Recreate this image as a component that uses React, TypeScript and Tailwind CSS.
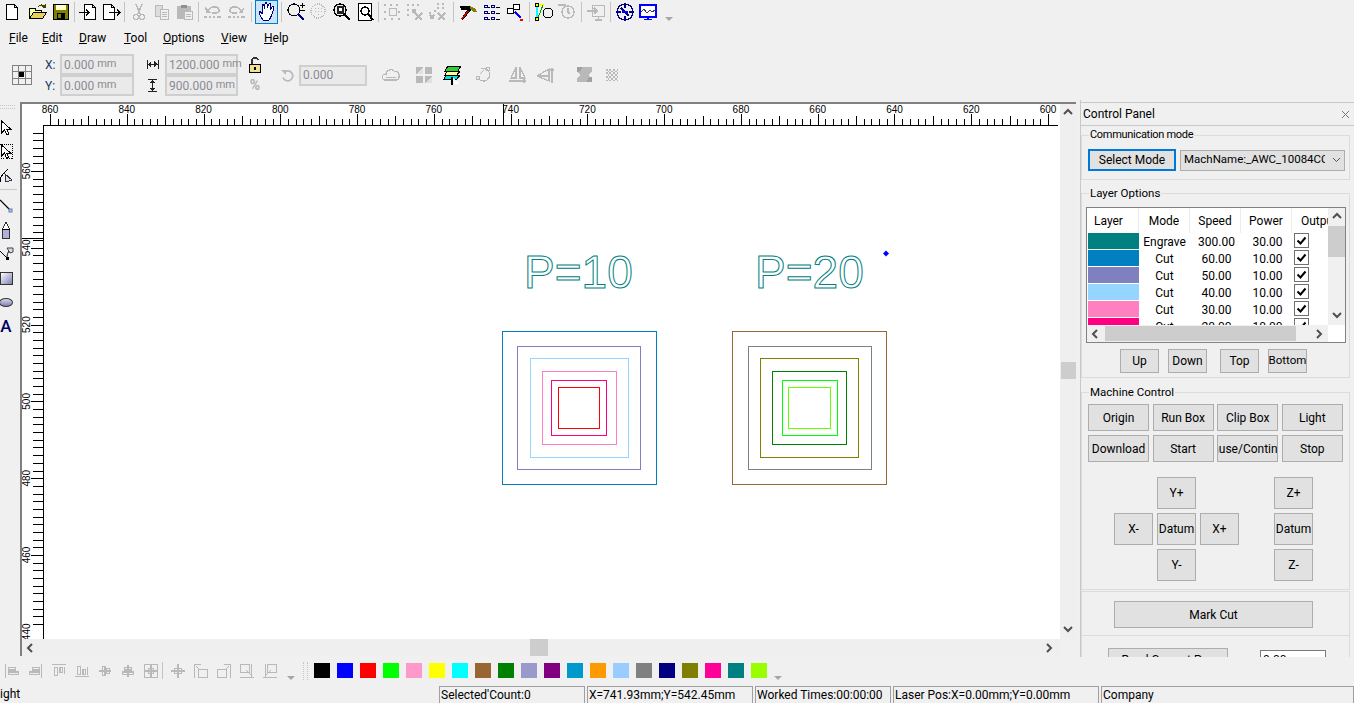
import React from "react";

const GRAY = "#b9b9b9";
const NAVY = "#000080";

const Ico = ({ children, s = 20 }: { children: React.ReactNode; s?: number }) => (
  <svg width={s} height={s} viewBox="0 0 20 20" fill="none" shapeRendering="crispEdges">
    {children}
  </svg>
);

const Tool = ({ children, active }: { children: React.ReactNode; active?: boolean }) => (
  <div
    className={
      active
        ? "w-[23px] h-[24px] flex items-center justify-center bg-[#cce4f7] border border-[#0078d7]"
        : "w-[23px] h-[24px] flex items-center justify-center"
    }
  >
    {children}
  </div>
);

const TopSep = ({ className }: { className: string }) => (
  <div className={"h-[24px] flex justify-center " + className}>
    <div className="w-px h-[20px] mt-[2px] bg-[#c4c4c4]" />
  </div>
);

const Chevron = () => (
  <svg width="8" height="5" viewBox="0 0 8 5">
    <path d="M0 0h8L4 4z" fill="#a6a6a6" />
  </svg>
);

const Btn = ({ children, className }: { children: React.ReactNode; className: string }) => (
  <div
    className={
      "flex items-center justify-center overflow-hidden whitespace-nowrap bg-[#e1e1e1] border border-[#adadad] text-[12px] text-black " +
      className
    }
  >
    {children}
  </div>
);

const Arrow = ({ dir }: { dir: "up" | "down" | "left" | "right" }) => {
  const d = {
    up: "M1 6l4-4 4 4",
    down: "M1 2l4 4 4-4",
    left: "M6 1L2 5l4 4",
    right: "M3 1l4 4-4 4",
  }[dir];
  return (
    <svg width="10" height="10" viewBox="0 0 10 10" fill="none">
      <path d={d} stroke="#505050" strokeWidth="2" />
    </svg>
  );
};

const Field = ({ value, unit, className }: { value: string; unit?: string; className: string }) => (
  <div
    className={
      "flex items-center h-[21px] pl-[2px] border-2 border-[#cfcfcf] bg-[#eaeaea] text-[12px] text-[#8b8b94] " + className
    }
  >
    <span>{value}</span>
    {unit && <span className="ml-[3px] text-[11px]">{unit}</span>}
  </div>
);

const topTicks = () => {
  const out: React.ReactNode[] = [];
  for (let i = 0; i < 131; i++) {
    const x = Math.round(50 + i * 7.677) + 0.5;
    const h = i % 10 === 0 ? 11 : i % 5 === 0 ? 9 : 6;
    out.push(<line key={"t" + i} x1={x} x2={x} y1={125} y2={125 - h} stroke="#000" />);
  }
  return out;
};

const leftTicks = () => {
  const out: React.ReactNode[] = [];
  for (let i = -6; i < 60; i++) {
    const y = Math.round(171 + i * 7.68) + 0.5;
    if (y < 126) continue;
    const h = i % 10 === 0 ? 12 : 10;
    out.push(<line key={"l" + i} y1={y} y2={y} x1={43} x2={43 - h} stroke="#000" />);
  }
  return out;
};

const topLabels = ["860", "840", "820", "800", "780", "760", "740", "720", "700", "680", "660", "640", "620", "600"];
const leftLabels = ["560", "540", "520", "500", "480", "460", "440"];

const squares: [number, number, number, number, string][] = [
  [502, 331, 154, 153, "#0080c0"],
  [517, 346, 123, 123, "#8080c0"],
  [530, 358, 98, 99, "#95d5ff"],
  [542, 371, 74, 73, "#ff80c0"],
  [551, 380, 55, 55, "#ff0080"],
  [558, 387, 41, 41, "#ff0000"],
  [732, 331, 154, 153, "#996633"],
  [748, 346, 123, 123, "#808080"],
  [760, 358, 98, 99, "#808000"],
  [772, 371, 74, 73, "#008000"],
  [782, 380, 55, 55, "#00ff00"],
  [788, 387, 42, 41, "#66ff00"],
];

const palette = [
  "#000000", "#0000ff", "#ff0000", "#00ff00", "#ff99cc", "#ffff00", "#00ffff", "#996633", "#008000", "#9999cc",
  "#800080", "#0099cc", "#ff9900", "#99ccff", "#808080", "#000080", "#808000", "#ff0099", "#008080", "#99ff00",
];

const layers = [
  { c: "#008080", m: "Engrave", s: "300.00", p: "30.00" },
  { c: "#0080c0", m: "Cut", s: "60.00", p: "10.00" },
  { c: "#8080c0", m: "Cut", s: "50.00", p: "10.00" },
  { c: "#95d5ff", m: "Cut", s: "40.00", p: "10.00" },
  { c: "#ff80c0", m: "Cut", s: "30.00", p: "10.00" },
  { c: "#ff0080", m: "Cut", s: "20.00", p: "10.00" },
];

const Check = () => (
  <div className="w-[15px] h-[15px] ml-[2px] bg-white border border-[#707070] flex items-center justify-center">
    <svg width="11" height="11" viewBox="0 0 11 11" fill="none">
      <path d="M1.5 5.5l3 3 5-6" stroke="#000" strokeWidth="2" />
    </svg>
  </div>
);

const AlignIcon = ({ d }: { d: string }) => (
  <div className="w-[23px] h-[22px] flex items-center justify-center">
    <Ico s={18}>
      <path d={d} stroke={GRAY} strokeWidth="1.5" />
    </Ico>
  </div>
);

const LeftTool = ({ children }: { children: React.ReactNode }) => (
  <div className="w-[12px] h-[24px] flex items-center justify-center">{children}</div>
);

const GrayIcon = ({ children, className }: { children: React.ReactNode; className: string }) => (
  <div className={"flex items-center justify-center h-[22px] " + className}>
    <Ico s={20}>{children}</Ico>
  </div>
);

export default function App() {
  return (
    <div className="w-[1354px] h-[703px] overflow-hidden flex flex-col bg-[#f0f0f0] text-black text-[12px] [font-family:Roboto,sans-serif]">
      {/* main toolbar */}
      <div className="h-[25px] flex items-start">
        <Tool>
          <Ico>
            <path d="M4.5 2.5h8l3 3v12h-11z M12.5 2.5v3h3" stroke="#000" fill="#fff" />
          </Ico>
        </Tool>
        <div className="w-[3px]" />
        <Tool>
          <Ico>
            <path d="M1.5 16.5v-10h6v2h6v8z" stroke="#000" fill="#ffff99" />
            <path d="M1.5 16.5l4-6h13l-4 6z" stroke="#000" fill="#e8d060" />
            <path d="M10 5c1-3 4-3 6-2l2-1v4h-4l1-1c-1-1-3-1-5 0z" fill="#404000" />
          </Ico>
        </Tool>
        <Tool>
          <Ico>
            <rect x="2.5" y="2.5" width="15" height="15" fill="#808000" stroke="#000" />
            <rect x="5" y="3" width="10" height="5" fill="#ffffcc" />
            <rect x="6" y="11" width="8" height="6" fill="#000" />
            <rect x="7" y="12" width="3" height="4" fill="#808000" />
          </Ico>
        </Tool>
        <TopSep className="w-[4px]" />
        <Tool>
          <Ico>
            <path d="M6.5 2.5h8l3 3v12h-11z M14.5 2.5v3h3" stroke="#000" fill="#fff" />
            <path d="M1 10.5h10M8 7.5l3 3-3 3" stroke="#000" />
          </Ico>
        </Tool>
        <Tool>
          <Ico>
            <path d="M2.5 2.5h8l3 3v12h-11z M10.5 2.5v3h3" stroke="#000" fill="#fff" />
            <path d="M8 10.5h11M16 7.5l3 3-3 3" stroke="#000" />
          </Ico>
        </Tool>
        <TopSep className="w-[5px]" />
        <Tool>
          <Ico>
            <path d="M7 2l4 10M13 2L9 12" stroke={GRAY} strokeWidth="1.5" />
            <circle cx="7" cy="15" r="2.5" stroke={GRAY} strokeWidth="1.5" />
            <circle cx="13" cy="15" r="2.5" stroke={GRAY} strokeWidth="1.5" />
          </Ico>
        </Tool>
        <Tool>
          <Ico>
            <path d="M3.5 3.5h7v11h-7z" stroke={GRAY} fill="#dcdcdc" />
            <path d="M8.5 7.5h8v10h-8z M10 10h5M10 12h5M10 14h5" stroke={GRAY} fill="#f0f0f0" />
          </Ico>
        </Tool>
        <Tool>
          <Ico>
            <path d="M2.5 4.5h13v12h-13z" fill={GRAY} stroke={GRAY} />
            <path d="M6 3h6v3H6z" fill="#8f8f8f" />
            <path d="M9.5 9.5h8v8h-8z M11 12h5M11 14h5" stroke={GRAY} fill="#f0f0f0" />
          </Ico>
        </Tool>
        <TopSep className="w-[5px]" />
        <Tool>
          <Ico>
            <path d="M5 9C6 5 12 4 15 6c2 2 1 5-2 5H9M1 15h3M6 15h2M10 15h2M14 15h4" stroke={GRAY} strokeWidth="1.5" />
            <path d="M2 5l1 6h5z" fill={GRAY} />
          </Ico>
        </Tool>
        <Tool>
          <Ico>
            <path d="M15 9C14 5 8 4 5 6c-2 2-1 5 2 5h4M2 15h3M7 15h2M11 15h2M15 15h4" stroke={GRAY} strokeWidth="1.5" />
            <path d="M18 5l-1 6h-5z" fill={GRAY} />
          </Ico>
        </Tool>
        <TopSep className="w-[8px]" />
        <Tool active>
          <Ico>
            <path
              d="M6 18C4 15 2 12 2 10c1-1 2 0 3 2l0-8c0-2 2-2 2 0v3l1-5c0-2 2-2 2 0v4l2-4c1-1 2 0 2 1l-1 5 2-3c1-1 2 0 2 1l-2 6c-1 3-2 5-3 6z"
              stroke={NAVY}
              fill="#fff"
            />
          </Ico>
        </Tool>
        <TopSep className="w-[6px]" />
        <Tool>
          <Ico>
            <circle cx="8" cy="8" r="6" stroke="#000" strokeWidth="1.2" />
            <path d="M12 12l6 6" stroke={NAVY} strokeWidth="2" />
            <path d="M14 3h5M16.5 1v5M14 8h5" stroke="#000" />
          </Ico>
        </Tool>
        <Tool>
          <Ico>
            <circle cx="9" cy="9" r="7" stroke={GRAY} strokeDasharray="1 1" strokeWidth="1.5" />
            <path d="M6 6h1v1H6zM9 6h1v1H9zM12 6h1v1h-1zM6 9h1v1H6zM9 9h1v1H9zM12 9h1v1h-1zM9 12h1v1H9z" fill={GRAY} />
          </Ico>
        </Tool>
        <Tool>
          <Ico>
            <circle cx="8" cy="8" r="6" stroke="#000" strokeWidth="1.5" />
            <path d="M5 4h7v8H5z" fill="#202020" />
            <path d="M7 6h3v3H7z" fill="#fff" />
            <path d="M12 12l6 6" stroke="#000" strokeWidth="2" />
          </Ico>
        </Tool>
        <Tool>
          <Ico>
            <path d="M3.5 1.5h13v17h-13z" stroke="#000" fill="#fff" />
            <circle cx="10" cy="9" r="4" stroke="#000" strokeWidth="1.5" />
            <path d="M13 12l5 6" stroke="#000" strokeWidth="2" />
          </Ico>
        </Tool>
        <TopSep className="w-[4px]" />
        <Tool>
          <Ico>
            <path d="M7.5 6.5h7v7h-7z" stroke={GRAY} />
            <path d="M2 2h2v2H2zM8 2h2v2H8zM14 2h2v2h-2zM2 9h2v2H2zM2 16h2v2H2zM9 16h2v2H9zM16 16h2v2h-2zM16 9h2v2h-2z" fill={GRAY} />
          </Ico>
        </Tool>
        <Tool>
          <Ico>
            <path d="M2 2h2v2H2zM7 2h2v2H7zM12 2h2v2h-2zM2 7h2v2H2zM2 12h2v2H2zM7 7h4v4H7z" fill={GRAY} />
            <path d="M10 11l7 7M17 11l-7 7" stroke={GRAY} strokeWidth="2" />
          </Ico>
        </Tool>
        <Tool>
          <Ico>
            <path d="M9 1h2v2H9zM14 1h2v2h-2zM14 5h2v2h-2zM9 5h2v2H9zM1 10h2v2H1zM6 8h2v2H6z" fill={GRAY} />
            <path d="M2 13l4 4M6 13l-4 4M10 11l7 7M17 11l-7 7" stroke={GRAY} strokeWidth="1.5" />
          </Ico>
        </Tool>
        <TopSep className="w-[8px]" />
        <Tool>
          <Ico>
            <path d="M1 4h10l6 3 1 3-3 0-3-2-8 10-2-1 6-9H2z" fill="#000" />
            <path d="M11 4l6 3 1 3-3 0-4-3z" fill="#808000" />
            <path d="M9 9l-6 8" stroke="#c00000" strokeWidth="1.5" />
          </Ico>
        </Tool>
        <Tool>
          <Ico>
            <path d="M2.5 3.5h3v2h-3zM2.5 9.5h3v2h-3zM2.5 15.5h3v2h-3zM9 3.5h3v2H9zM9 9.5h3v2H9zM9 15.5h3v2H9z" stroke={NAVY} />
            <path d="M14 5h4M14 11h4M14 17h4M6 5h2M6 11h2M6 17h2" stroke="#000" />
          </Ico>
        </Tool>
        <Tool>
          <Ico>
            <path d="M8.5 2.5h6v5h-6zM2.5 6.5h6v5h-6z" stroke="#000" fill="#fff" />
            <path d="M10 10l6 6" stroke="#0000ff" strokeWidth="1.5" />
            <path d="M15 17h3v2h-3z" fill="#ff0000" />
            <path d="M13 15h3v-1h-3z" fill="#0000ff" />
          </Ico>
        </Tool>
        <TopSep className="w-[6px]" />
        <Tool>
          <Ico>
            <path d="M3 3v13" stroke="#00ffff" strokeWidth="1.5" />
            <path d="M3 3h7" stroke="#ffff00" strokeWidth="1.5" />
            <path d="M9 3L4 16" stroke="#00a000" />
            <circle cx="14" cy="11" r="5" stroke="#000" />
            <path d="M1.5 1.5h3v3h-3zM1.5 15.5h3v3h-3z" stroke="#000" fill="#ffff00" />
          </Ico>
        </Tool>
        <Tool>
          <Ico>
            <circle cx="11" cy="10" r="6" stroke={GRAY} strokeWidth="1.5" />
            <path d="M1 3h8M11 6v4l2 2" stroke={GRAY} strokeWidth="1.5" />
          </Ico>
        </Tool>
        <TopSep className="w-[6px]" />
        <Tool>
          <Ico>
            <path d="M6.5 3.5h12v11h-12zM9 18h7M12.5 15v3" stroke={GRAY} strokeWidth="1.2" />
            <path d="M1 9h9M8 6l3 3-3 3" stroke={GRAY} strokeWidth="1.5" />
          </Ico>
        </Tool>
        <TopSep className="w-[6px]" />
        <Tool>
          <Ico>
            <circle cx="10" cy="10" r="8" stroke={NAVY} strokeWidth="1.5" />
            <path d="M10 2v4M10 14v4M2 10h4M14 10h4M6 6l8 8" stroke={NAVY} strokeWidth="1.5" />
            <path d="M7 9h6v2H7z" fill="#0000ff" />
          </Ico>
        </Tool>
        <Tool>
          <Ico>
            <rect x="2" y="3" width="16" height="12" stroke="#0000ff" strokeWidth="1.5" fill="#fff" />
            <path d="M3 10l3-3 3 4 3-3 2 2 3-2" stroke="#404040" />
            <path d="M6 17h8v1H6zM9 15h2v2H9z" fill="#0000ff" />
          </Ico>
        </Tool>
        <div className="ml-[6px] mt-[17px] flex">
          <Chevron />
        </div>
      </div>

      {/* menu */}
      <div className="h-[25px] flex items-center pl-[9px] text-[12px]">
        <span className="w-[33px]"><u>F</u>ile</span>
        <span className="w-[37px]"><u>E</u>dit</span>
        <span className="w-[45px]"><u>D</u>raw</span>
        <span className="w-[39px]"><u>T</u>ool</span>
        <span className="w-[58px]"><u>O</u>ptions</span>
        <span className="w-[43px]"><u>V</u>iew</span>
        <span><u>H</u>elp</span>
      </div>

      {/* property bar */}
      <div className="h-[50px] flex items-center">
        <div className="ml-[12px] w-[20px] h-[20px] grid grid-cols-3 grid-rows-3 border-t border-l border-[#808080]">
          {[0, 1, 2, 3, 4, 5, 6, 7, 8].map((i) => (
            <div key={i} className="border-r border-b border-[#808080] flex items-center justify-center">
              {i === 4 && <div className="w-[5px] h-[5px] bg-black" />}
            </div>
          ))}
        </div>
        <div className="ml-[13px] flex flex-col gap-0 text-[#1a3a6a]">
          <div className="h-[21px] flex items-center gap-[6px]">
            <span className="w-[9px]">X:</span>
            <Field value="0.000" unit="mm" className="w-[74px]" />
          </div>
          <div className="h-[21px] flex items-center gap-[6px]">
            <span className="w-[9px]">Y:</span>
            <Field value="0.000" unit="mm" className="w-[74px]" />
          </div>
        </div>
        <div className="ml-[11px] w-[14px] flex flex-col">
          <div className="h-[21px] flex items-center justify-center">
            <svg width="13" height="9" viewBox="0 0 13 9" fill="none" shapeRendering="crispEdges">
              <path d="M1 0v9M12 0v9M1 4h11" stroke="#222" />
              <path d="M2 4l3-3v7zM11 4l-3-3v7z" fill="#222" />
            </svg>
          </div>
          <div className="h-[21px] flex items-center justify-center">
            <svg width="9" height="13" viewBox="0 0 9 13" fill="none" shapeRendering="crispEdges">
              <path d="M0 0.5h9M0 12.5h9M4.5 1v11" stroke="#222" />
              <path d="M4.5 1l3 3H1.5zM4.5 12l3-3H1.5z" fill="#222" />
            </svg>
          </div>
        </div>
        <div className="ml-[6px] flex flex-col">
          <Field value="1200.000" unit="mm" className="w-[73px]" />
          <Field value="900.000" unit="mm" className="w-[73px]" />
        </div>
        <div className="ml-[10px] w-[14px] flex flex-col items-center">
          <svg width="14" height="18" viewBox="0 0 14 18" fill="none" shapeRendering="crispEdges">
            <path d="M4 8V4c0-3 6-3 6 0" stroke="#333" strokeWidth="1.5" />
            <rect x="1.5" y="8.5" width="11" height="8" fill="#f0e090" stroke="#000" />
            <rect x="6" y="11" width="2" height="3" fill="#000" />
          </svg>
          <span className="mt-[2px] text-[14px] leading-[18px] text-[#b0b0b0] font-bold">%</span>
        </div>
        <div className="ml-[18px] w-[15px] flex justify-center">
          <svg width="13" height="13" viewBox="0 0 13 13" fill="none">
            <path d="M3 3.5a5 5 0 1 1-1 5" stroke={GRAY} strokeWidth="1.8" />
            <path d="M0 1h5v5z" fill={GRAY} />
          </svg>
        </div>
        <Field value="0.000" className="ml-[4px] w-[68px]" />
        <GrayIcon className="ml-[13px] w-[22px]">
          <path d="M2 14c-2-3 0-5 3-5 0-4 7-6 9-2 3-1 5 2 4 5 0 2-1 3-3 3H3z" stroke={GRAY} strokeWidth="1.2" />
          <path d="M5 12h10" stroke={GRAY} />
        </GrayIcon>
        <GrayIcon className="ml-[11px] w-[22px]">
          <path d="M2 2h7v7H2zM11 2h7v7h-7zM2 11h7v7H2zM11 11h7v7h-7z" fill={GRAY} />
          <path d="M2 9l7-7v7zM11 18l7-7v7z" fill="#e0e0e0" />
        </GrayIcon>
        <GrayIcon className="ml-[8px] w-[20px]">
          <path d="M5 1h13l-3 5H2z" fill="#30d030" stroke="#000" />
          <path d="M4 6h13l-3 4H2z" fill="#ffff99" stroke="#000" />
          <path d="M3 10h14l-3 4H1z" fill="#00e0e0" stroke="#000" />
          <path d="M9 12v8" stroke="#000" strokeWidth="1.5" />
          <path d="M10 13l6 6h-5z" fill="#fff" />
        </GrayIcon>
        <GrayIcon className="ml-[10px] w-[20px]">
          <path d="M8 4a7 7 0 0 1 8 3c2 4-1 9-5 9-3 0-5-1-6-3" stroke={GRAY} strokeWidth="1.2" />
          <path d="M3.5 11.5h3v3h-3zM13.5 2.5h3v3h-3zM7 9l4-4" stroke={GRAY} />
        </GrayIcon>
        <GrayIcon className="ml-[15px] w-[20px]">
          <path d="M8 2v11H3zM12 2v11h5z" stroke={GRAY} strokeWidth="1.2" />
          <path d="M1 16h16M15 14l3 2-3 2" stroke={GRAY} strokeWidth="1.2" />
        </GrayIcon>
        <GrayIcon className="ml-[8px] w-[20px]">
          <path d="M1 11l12-7v6zM1 11l12 5v-5z" stroke={GRAY} strokeWidth="1.2" />
          <path d="M16 18V4M14 6l2-3 2 3" stroke={GRAY} strokeWidth="1.2" />
        </GrayIcon>
        <GrayIcon className="ml-[19px] w-[20px]">
          <path d="M2 2h15v15H2z" fill={GRAY} />
          <path d="M2 7l4 3-4 3zM17 7l-4 3 4 3z" fill="#f0f0f0" />
          <path d="M2 2h5l-1 4-4 1zM17 17h-5l1-4 4-1z" fill="#a0a0a0" />
        </GrayIcon>
        <GrayIcon className="ml-[8px] w-[18px]">
          <path
            d="M3 3h2v2H3zM7 3h2v2H7zM11 3h2v2h-2zM15 3h2v2h-2zM5 5h2v2H5zM9 5h2v2H9zM13 5h2v2h-2zM3 7h2v2H3zM7 7h2v2H7zM11 7h2v2h-2zM15 7h2v2h-2zM5 9h2v2H5zM9 9h2v2H9zM13 9h2v2h-2zM3 11h2v2H3zM7 11h2v2H7zM11 11h2v2h-2zM15 11h2v2h-2zM5 13h2v2H5zM9 13h2v2H9zM13 13h2v2h-2zM3 15h2v2H3zM7 15h2v2H7zM11 15h2v2h-2zM15 15h2v2h-2z"
            fill={GRAY}
          />
        </GrayIcon>
      </div>

      {/* work area */}
      <div className="h-[557px] flex">
        <div className="w-[20px] flex flex-col pt-[5px]">
          <div className="w-[15px] h-[4px] border-t border-b border-dotted border-[#c8c8c8]" />
          <div className="h-[7px]" />
          <LeftTool>
            <svg width="12" height="16" viewBox="0 0 12 16" fill="none" shapeRendering="crispEdges">
              <path d="M1.5 1v12l3-3 2.5 5 2-1-2.500-5h4z" stroke="#000" fill="#fff" />
            </svg>
          </LeftTool>
          <LeftTool>
            <svg width="14" height="16" viewBox="0 0 14 16" fill="none" shapeRendering="crispEdges" className="shrink-0">
              <rect x="0.5" y="0.5" width="13" height="14" stroke="#000" strokeDasharray="1 1" />
              <path d="M2.500 1v11l3-3 2 5 2-1-2-4h4z" stroke="#000" fill="#fff" />
            </svg>
          </LeftTool>
          <LeftTool>
            <svg width="15" height="16" viewBox="0 0 15 16" fill="none" shapeRendering="crispEdges" className="shrink-0">
              <path d="M1 14c0-6 3-8 8-13" stroke="#000" />
              <path d="M6 6l7 6-6 2z" stroke="#333" fill="#e0e0f0" />
            </svg>
          </LeftTool>
          <div className="w-[17px] h-px bg-[#c8c8c8] mt-px mb-[4px]" />
          <LeftTool>
            <svg width="14" height="14" viewBox="0 0 14 14" fill="none" className="shrink-0">
              <path d="M1 1l11 11" stroke="#000" strokeWidth="1.2" />
              <rect x="10" y="10" width="3" height="3" fill="#b8c8e0" stroke="#6080b0" />
            </svg>
          </LeftTool>
          <LeftTool>
            <svg width="10" height="17" viewBox="0 0 10 17" fill="none" shapeRendering="crispEdges">
              <path d="M5 0L1.500 7v9h7V7z" stroke="#333" fill="#fff" />
              <rect x="2" y="8" width="6" height="8" fill="#b0b0d8" />
              <path d="M1 7h8" stroke="#000" />
            </svg>
          </LeftTool>
          <LeftTool>
            <svg width="15" height="16" viewBox="0 0 15 16" fill="none" className="shrink-0">
              <path d="M1 5l7 7M8 12c0-5 2-8 5-9" stroke="#000" />
              <rect x="7" y="11" width="3" height="3" fill="#000" />
              <path d="M8 2h6v4l-3 1z" fill="#d8d8f0" stroke="#444" />
            </svg>
          </LeftTool>
          <LeftTool>
            <div className="w-[13px] h-[13px] shrink-0 border border-[#333] bg-linear-to-br from-white to-[#8080b0]" />
          </LeftTool>
          <LeftTool>
            <div className="w-[14px] h-[9px] shrink-0 rounded-[50%] border border-[#333] bg-linear-to-b from-[#d8d8e8] to-[#8080b0]" />
          </LeftTool>
          <LeftTool>
            <span className="text-[17px] leading-[20px] text-[#000060] font-medium">A</span>
          </LeftTool>
        </div>

        <div className="w-[1056px] mt-[2px] h-[554px] border-t-2 border-l-2 border-[#808080] flex flex-col">
          <div className="h-[535px] flex">
            <svg
              width="1038"
              height="535"
              viewBox="22 104 1038 535"
              className="block bg-white [font-family:'Liberation_Sans',sans-serif]"
            >
              <g shapeRendering="crispEdges">
                <line x1={43} x2={1058} y1={125.5} y2={125.5} stroke="#000" />
                <line x1={43.5} x2={43.5} y1={125} y2={639} stroke="#000" />
                {topTicks()}
                {leftTicks()}
                <line x1={503.5} x2={503.5} y1={104} y2={119} stroke="#000" />
                <line x1={22} x2={43} y1={238.5} y2={238.5} stroke="#000" />
              </g>
              {topLabels.map((t, i) => (
                <text key={t} x={50 + i * 76.77} y={113} fontSize="10" textAnchor="middle" fill="#000">
                  {t}
                </text>
              ))}
              {leftLabels.map((t, i) => (
                <text
                  key={t}
                  transform={`translate(30 ${171 + i * 76.8}) rotate(-90)`}
                  fontSize="10"
                  textAnchor="middle"
                  fill="#000"
                >
                  {t}
                </text>
              ))}
              <g shapeRendering="crispEdges" fill="none">
                {squares.map(([x, y, w, h, c]) => (
                  <rect key={x + c} x={x + 0.5} y={y + 0.5} width={w} height={h} stroke={c} />
                ))}
              </g>
              <text x={524} y={288} fontSize="46" fill="none" stroke="#008080" strokeWidth="1">
                P=10
              </text>
              <text x={755} y={288} fontSize="46" fill="none" stroke="#008080" strokeWidth="1">
                P=20
              </text>
              <path d="M886 250.500l3 3-3 3-3-3z" fill="#0000ff" />
            </svg>
            <div className="w-[16px] flex flex-col items-center bg-[#efefef]">
              <div className="h-[18px] flex items-center justify-center">
                <Arrow dir="up" />
              </div>
              <div className="mt-[240px] w-[15px] h-[17px] bg-[#cdcdcd]" />
              <div className="mt-auto h-[18px] flex items-center justify-center">
                <Arrow dir="down" />
              </div>
            </div>
          </div>
          <div className="h-[17px] flex items-center bg-[#efefef] w-[1038px]">
            <div className="w-[14px] ml-[2px] flex justify-center">
              <Arrow dir="left" />
            </div>
            <div className="ml-[492px] w-[18px] h-[17px] bg-[#cdcdcd]" />
            <div className="ml-auto w-[18px] mr-[2px] flex justify-center">
              <Arrow dir="right" />
            </div>
          </div>
        </div>

        {/* control panel */}
        <div className="w-[274px] ml-[4px] pt-[2px] overflow-hidden border-l border-[#c8c8c8]">
          <div className="h-[24px] border-t border-b border-[#c8c8c8] flex items-center justify-between pl-[2px] pr-[4px] text-[12px]">
            <span>Control Panel</span>
            <svg width="9" height="9" viewBox="0 0 9 9" fill="none">
              <path d="M1 1l7 7M8 1L1 8" stroke="#777" />
            </svg>
          </div>

          <fieldset className="mt-px w-[269px] h-[53px] border border-[#dcdcdc]">
            <legend className="ml-[7px] px-px h-[16px] leading-[16px] text-[11px] tracking-[-0.3px]">Communication mode</legend>
            <div className="mt-[6px] ml-[6px] flex items-center gap-[4px]">
              <Btn className="w-[88px] h-[22px] !border-2 !border-[#0078d7]">Select Mode</Btn>
              <div className="w-[165px] h-[21px] bg-[#e1e1e1] border border-[#adadad] flex items-center pl-[3px] overflow-hidden">
                <span className="w-[141px] overflow-hidden whitespace-nowrap text-[11.5px]">MachName:_AWC_10084CC0</span>
                <svg width="9" height="6" viewBox="0 0 9 6" fill="none" className="ml-[7px]">
                  <path d="M1 1l3.500 3.500L8 1" stroke="#555" />
                </svg>
              </div>
            </div>
          </fieldset>

          <fieldset className="mt-[5px] w-[269px] h-[193px] border border-[#dcdcdc]">
            <legend className="ml-[7px] px-px h-[16px] leading-[16px] text-[11.5px]">Layer Options</legend>
            <div className="mt-[6px] ml-[4px] w-[260px] h-[136px] border border-[#828282] bg-white grid grid-cols-[241px_17px] grid-rows-[117px_17px]">
              <div className="overflow-hidden">
                <div className="h-[25px] grid grid-cols-[52px_51px_51px_51px_36px] items-center">
                  <span className="pl-[7px] border-r border-[#ececec] leading-[27px] h-[25px]">Layer</span>
                  <span className="text-center border-r border-[#ececec] leading-[27px] h-[25px]">Mode</span>
                  <span className="text-center border-r border-[#ececec] leading-[27px] h-[25px]">Speed</span>
                  <span className="text-center border-r border-[#ececec] leading-[27px] h-[25px]">Power</span>
                  <span className="pl-[9px] whitespace-nowrap overflow-hidden leading-[27px] h-[25px]">Output</span>
                </div>
                {layers.map((l) => (
                  <div key={l.c} className="h-[17px] grid grid-cols-[52px_51px_51px_51px_36px] items-start">
                    <div className="h-[16px] ml-px" style={{ backgroundColor: l.c }} />
                    <span className="text-center leading-[19px] h-[17px]">{l.m}</span>
                    <span className="text-center leading-[19px] h-[17px] pl-[2px]">{l.s}</span>
                    <span className="text-center leading-[19px] h-[17px] pl-[2px]">{l.p}</span>
                    <Check />
                  </div>
                ))}
              </div>
              <div className="bg-[#f0f0f0] flex flex-col items-center">
                <div className="h-[18px] flex items-center justify-center">
                  <Arrow dir="up" />
                </div>
                <div className="w-[17px] h-[31px] bg-[#cdcdcd]" />
                <div className="mt-auto h-[18px] flex items-center justify-center">
                  <Arrow dir="down" />
                </div>
              </div>
              <div className="bg-[#f0f0f0] flex items-center">
                <div className="w-[18px] flex justify-center">
                  <Arrow dir="left" />
                </div>
                <div className="w-[191px] h-[15px] bg-[#cdcdcd]" />
                <div className="ml-auto w-[18px] flex justify-center">
                  <Arrow dir="right" />
                </div>
              </div>
              <div className="bg-white" />
            </div>
            <div className="mt-[6px] ml-[38px] flex">
              <Btn className="w-[39px] h-[24px]">Up</Btn>
              <Btn className="ml-[9px] w-[39px] h-[24px]">Down</Btn>
              <Btn className="ml-[13px] w-[39px] h-[24px]">Top</Btn>
              <Btn className="ml-[9px] w-[39px] h-[24px] !text-[11.5px]">Bottom</Btn>
            </div>
          </fieldset>

          <fieldset className="mt-[6px] w-[269px] h-[206px] border border-[#dcdcdc]">
            <legend className="ml-[7px] px-px h-[16px] leading-[16px] text-[11.5px]">Machine Control</legend>
            <div className="mt-[4px] ml-[6px] grid grid-cols-[61px_61px_61px_61px] grid-rows-[27px_27px] gap-x-[3.6px] gap-y-[4px]">
              <Btn className="">Origin</Btn>
              <Btn className="">Run Box</Btn>
              <Btn className="">Clip Box</Btn>
              <Btn className="">Light</Btn>
              <Btn className="">Download</Btn>
              <Btn className="">Start</Btn>
              <Btn className="">Pause/Continue</Btn>
              <Btn className="">Stop</Btn>
            </div>
            <div className="mt-[15px] ml-[32px] flex">
              <div className="grid grid-cols-[39px_39px_39px] grid-rows-[32px_32px_32px] gap-x-[4px] gap-y-[4px]">
                <div />
                <Btn className="">Y+</Btn>
                <div />
                <Btn className="">X-</Btn>
                <Btn className="">Datum</Btn>
                <Btn className="">X+</Btn>
                <div />
                <Btn className="">Y-</Btn>
                <div />
              </div>
              <div className="ml-[35px] grid grid-rows-[32px_32px_32px] w-[39px] gap-y-[4px]">
                <Btn className="">Z+</Btn>
                <Btn className="">Datum</Btn>
                <Btn className="">Z-</Btn>
              </div>
            </div>
          </fieldset>

          <div className="mt-px w-[269px] h-[45px] border border-[#dcdcdc] pt-[9px] pl-[32px]">
            <Btn className="w-[199px] h-[27px]">Mark Cut</Btn>
          </div>
          <div className="w-[269px] h-[40px] border-x border-[#dcdcdc] pt-[12px] pl-[26px] flex items-start">
            <Btn className="w-[120px] h-[24px]">Read Current Pos</Btn>
            <div className="ml-[32px] mt-[2px] w-[66px] h-[20px] bg-white border border-[#7a7a7a] pl-[2px] leading-[18px]">0.00</div>
          </div>
        </div>
      </div>

      {/* align + palette bar */}
      <div className="h-[28px] flex items-center pl-[1px] pb-[1px] relative z-10 bg-[#f0f0f0]">
        <AlignIcon d="M2 2v16M5 6h8v3H5zM5 11h11v3H5z" />
        <AlignIcon d="M16 2v16M6 6h8v3H6zM3 11h11v3H3z" />
        <AlignIcon d="M2 3h16M5 6h3v9H5zM11 6h3v6h-3zM16 5v8" />
        <AlignIcon d="M2 16h16M5 5h3v9H5zM11 8h3v6h-3zM16 6v8" />
        <AlignIcon d="M3 10h14M7 5h3v10H7zM12 7h3v6h-3z" />
        <AlignIcon d="M10 3v14M6 6h8v3H6zM4 11h12v3H4z" />
        <AlignIcon d="M3 3h14v14H3zM7 7h6v6H7zM10 3v14M3 10h14" />
        <div className="w-px h-[17px] bg-[#c4c4c4] mr-[3px]" />
        <AlignIcon d="M2 10h16M10 2v16M6 7h8v6H6z" />
        <AlignIcon d="M2 3h8M3 2v16M7 8h10v9H7zM5 5l4 4" />
        <AlignIcon d="M18 3h-8M17 2v16M3 8h10v9H3zM15 5l-4 4" />
        <AlignIcon d="M2 17h16M15 2v16M3 3h10v9H3zM9 9l5 5" />
        <AlignIcon d="M18 17H2M5 2v16M7 3h10v9H7zM11 9l-5 5" />
        <div className="ml-[6px] mt-[16px] flex">
          <Chevron />
        </div>
        <div className="ml-[8px] w-[5px] h-[18px] border-x border-dotted border-[#c8c8c8]" />
        <div className="ml-[6px] flex">
          {palette.map((c, i) => (
            <div key={i} className="w-[23px] flex">
              <div className="w-[16px] h-[15px]" style={{ backgroundColor: c }} />
            </div>
          ))}
        </div>
        <div className="mt-[16px]">
          <Chevron />
        </div>
      </div>

      {/* status bar */}
      <div className="h-[18px] flex items-end text-[12px] leading-[17px] relative z-10">
        <span className="w-[439px] overflow-hidden">ight</span>
        <div className="w-[146px] h-[17px] border border-b-0 border-[#a0a0a0] pl-[1px] whitespace-nowrap overflow-hidden">Selected'Count:0</div>
        <div className="ml-[2px] w-[166px] h-[17px] border border-b-0 border-[#a0a0a0] pl-[1px] whitespace-nowrap overflow-hidden">X=741.93mm;Y=542.45mm</div>
        <div className="ml-[2px] w-[136px] h-[17px] border border-b-0 border-[#a0a0a0] pl-[1px] whitespace-nowrap overflow-hidden">Worked Times:00:00:00</div>
        <div className="ml-[2px] w-[206px] h-[17px] border border-b-0 border-[#a0a0a0] pl-[1px] whitespace-nowrap overflow-hidden">Laser Pos:X=0.00mm;Y=0.00mm</div>
        <div className="ml-[2px] w-[253px] h-[17px] border border-b-0 border-[#a0a0a0] pl-[1px] whitespace-nowrap overflow-hidden">Company</div>
      </div>
    </div>
  );
}
